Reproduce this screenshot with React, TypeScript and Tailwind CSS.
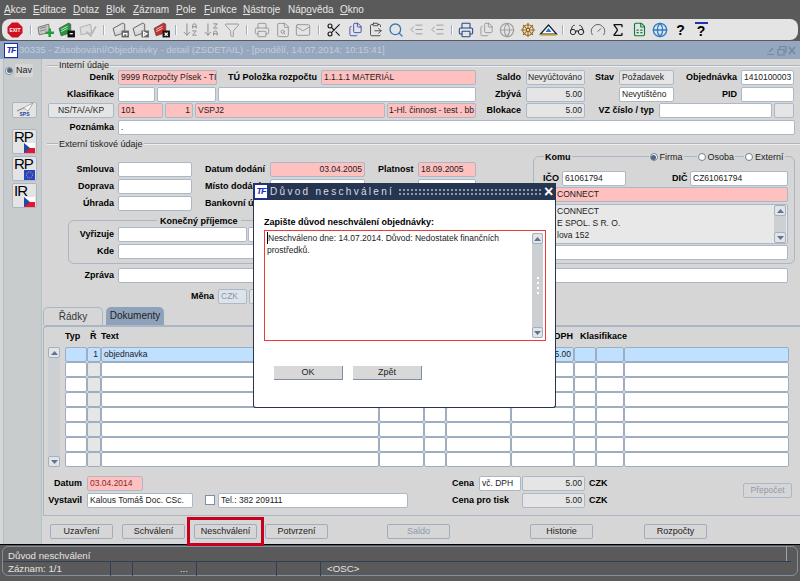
import type { ReactNode } from "react";
import {
  ArrowDownAZ,
  ArrowDownZA,
  ClipboardPaste,
  Files,
  FileSearch,
  FileSpreadsheet,
  Funnel,
  Gauge,
  Glasses,
  Globe,
  IndentDecrease,
  Mail,
  Printer,
  Scissors,
  Search,
  ShipWheel,
  Sigma,
} from "lucide-react";

const menu = [
  ["A", "kce", "w-[29px]"],
  ["E", "ditace", "w-[40px]"],
  ["D", "otaz", "w-[33px]"],
  ["B", "lok", "w-[27px]"],
  ["Z", "áznam", "w-[43px]"],
  ["P", "ole", "w-[28px]"],
  ["F", "unkce", "w-[39px]"],
  ["N", "ástroje", "w-[45px]"],
];

function Menu() {
  return (
    <div className="h-[19px] flex items-center pl-[4px] text-[10px] text-[#e6e6e6]">
      {menu.map(([a, b, w]) => (
        <span key={a} className={w}>
          <span className="underline">{a}</span>
          {b}
        </span>
      ))}
      <span className="w-[52px]">
        Náp<span className="underline">o</span>věda
      </span>
      <span>
        <span className="underline">O</span>kno
      </span>
    </div>
  );
}

function Sep({ c }: { c: string }) {
  return (
    <div className={`flex justify-center ${c}`}>
      <div className="w-[2px] h-[10px] bg-[#fafafa] border-l border-[#9fb0c6]" />
    </div>
  );
}

function Slot({ children }: { children: ReactNode }) {
  return <div className="w-[20.67px] h-[17px] flex items-center justify-center shrink-0">{children}</div>;
}

function CardIcon({ fill, mark, markFill }: { fill: string; mark: string; markFill: string }) {
  return (
    <svg width="18" height="16" viewBox="0 0 17 15">
      <path d="M1 6 L10 1 L12 2 L12 10 L3 13 Z" fill={fill} stroke="#555" strokeWidth="0.8" />
      <path d="M3 7 L9 4 M3 9 L9 6" stroke="#eee" strokeWidth="0.8" />
      <rect x="9" y="8" width="7" height="6.5" fill={markFill} />
      <path d={mark} stroke="#fff" strokeWidth="1.2" fill="none" />
    </svg>
  );
}

function PlusIcon() {
  return (
    <svg width="18" height="16" viewBox="0 0 17 15">
      <path d="M1 5 L11 2 L12 10 L2 12 Z" fill="#c8c8c8" stroke="#666" strokeWidth="0.8" />
      <path d="M3 6 L9 4.5 M3 8.5 L9 7" stroke="#777" strokeWidth="0.8" />
      <path d="M12 6 V14 M8 10 H16" stroke="#1f9e3a" strokeWidth="2.4" />
    </svg>
  );
}

function CheckIcon() {
  return (
    <svg width="18" height="16" viewBox="0 0 17 15">
      <path d="M1 5 L11 2 L12 10 L2 12 Z" fill="#ddd" stroke="#aaa" strokeWidth="0.8" />
      <path d="M7 9 L11 13 L16 4" stroke="#b5b5b5" strokeWidth="1.6" fill="none" />
    </svg>
  );
}

function Roof() {
  return (
    <svg width="19" height="13" viewBox="0 0 18 13">
      <path d="M1 11 L9 2 L17 11 Z" fill="#fff" stroke="#123" strokeWidth="1.2" />
      <path d="M6 9 L9 5 L12 9 Z" fill="#2f74c9" />
      <path d="M1 12 H17" stroke="#c9a326" strokeWidth="1.4" />
    </svg>
  );
}

function Help({ bar }: { bar?: boolean }) {
  return (
    <div className={`w-[13px] h-[15px] flex items-center justify-center text-[14px] font-bold leading-none text-black ${bar ? "border-t-2 border-[#2233aa]" : ""}`}>
      ?
    </div>
  );
}

const g = "#8e8e8e";

function Toolbar() {
  return (
    <div className="h-[21px] mx-[2px] pl-[3px] rounded-[8px] bg-[#e4e4e4] flex items-center">
      <Slot>
        <svg width="16" height="16" viewBox="0 0 16 16">
          <path d="M5 0.5 H11 L15.5 5 V11 L11 15.5 H5 L0.5 11 V5 Z" fill="#cf1020" />
          <text x="8" y="10" textAnchor="middle" fontSize="5" fontWeight="700" fill="#fff" fontFamily="Liberation Sans">EXIT</text>
        </svg>
      </Slot>
      <Sep c="w-[10.3px]" />
      <Slot><PlusIcon /></Slot>
      <Slot><CardIcon fill="#1d9a3a" mark="M11 11 H14" markFill="#111" /></Slot>
      <Slot><CheckIcon /></Slot>
      <Sep c="w-[12.3px]" />
      <Slot><CardIcon fill="#d9d9d9" mark="M11 10 V13 M14 10 V13 M11 11 H14" markFill="#666" /></Slot>
      <Slot><CardIcon fill="#d9d9d9" mark="M11 9.5 L14 11 L11 13 Z" markFill="#666" /></Slot>
      <Slot><CardIcon fill="#cf2b2b" mark="M11 10 L14 13 M14 10 L11 13" markFill="#111" /></Slot>
      <Sep c="w-[8.3px]" />
      <Slot><ArrowDownAZ size={17} color={g} strokeWidth={1.4} /></Slot>
      <Slot><ArrowDownZA size={17} color={g} strokeWidth={1.4} /></Slot>
      <Slot><Funnel size={16} color={g} strokeWidth={1.3} /></Slot>
      <Sep c="w-[9.3px]" />
      <Slot><Printer size={16} color={g} strokeWidth={1.3} /></Slot>
      <Slot><FileSearch size={16} color={g} strokeWidth={1.3} /></Slot>
      <Slot><Mail size={16} color={g} strokeWidth={1.3} /></Slot>
      <Sep c="w-[10.3px]" />
      <Slot><Scissors size={16} color="#111" strokeWidth={1.6} /></Slot>
      <Slot><Files size={15} color="#2438a8" strokeWidth={1.3} /></Slot>
      <Slot><ClipboardPaste size={15} color="#333" strokeWidth={1.3} /></Slot>
      <Slot><Search size={16} color="#3a78b5" strokeWidth={2} /></Slot>
      <Slot><IndentDecrease size={15} color={g} strokeWidth={1.3} /></Slot>
      <Slot><IndentDecrease size={15} color={g} strokeWidth={1.3} /></Slot>
      <Sep c="w-[7.3px]" />
      <Slot><Printer size={16} color="#274a86" strokeWidth={1.6} /></Slot>
      <Slot><Files size={15} color={g} strokeWidth={1.3} /></Slot>
      <Slot><Globe size={16} color="#a0a0a0" strokeWidth={1.8} /></Slot>
      <Slot><ShipWheel size={16} color="#9a6a14" strokeWidth={1.6} /></Slot>
      <Slot><Roof /></Slot>
      <Sep c="w-[8.3px]" />
      <Slot><Glasses size={16} color="#222" strokeWidth={1.4} /></Slot>
      <Slot><Gauge size={16} color="#666" strokeWidth={1.5} /></Slot>
      <Slot><Sigma size={16} color="#111" strokeWidth={2} /></Slot>
      <Slot><FileSpreadsheet size={15} color="#12783a" strokeWidth={1.8} /></Slot>
      <Slot><Globe size={16} color="#2c7cc9" strokeWidth={2} /></Slot>
      <Slot><Help /></Slot>
      <Slot><Help bar /></Slot>
    </div>
  );
}

function Logo() {
  return (
    <div className="w-[14px] h-[15px] border border-[#1a2fb0] bg-white flex items-center justify-center text-[9px] tracking-[-1px] leading-none italic font-bold text-[#1a2fb0] overflow-hidden shrink-0">
      TF
    </div>
  );
}

function WindowButtons() {
  return (
    <svg width="30" height="11" viewBox="0 0 30 11" className="mr-[4px]" fill="none" stroke="#76879e" strokeWidth="1.2">
      <path d="M1 9.5 H8 M3 7 L7 3" />
      <path d="M12 4.5 H18 V10 H12 Z M14 4 V1.5 H20 V7 H18.5" />
      <path d="M23 2 L29 9 M29 2 L23 9" strokeWidth="1.5" />
    </svg>
  );
}

function L({ c, children }: { c: string; children: ReactNode }) {
  return <span className={`text-[9px] leading-[15px] font-bold text-black whitespace-nowrap shrink-0 ${c}`}>{children}</span>;
}

function F({ c, children }: { c: string; children?: ReactNode }) {
  return (
    <div className={`h-[15px] border border-[#abb8c8] rounded-[2px] px-[2px] text-[8.5px] leading-[13px] whitespace-nowrap overflow-hidden shrink-0 ${c}`}>
      {children}
    </div>
  );
}

function Legend({ c, text }: { c: string; text: string }) {
  return (
    <div className={`flex items-center ml-[5px] ${c}`}>
      <div className="w-[11px] h-[2px] border-t border-[#aab6c6] bg-[#eee]" />
      <span className="px-[1px] text-[9px] leading-none text-[#222]">{text}</span>
      <div className="flex-1 h-[2px] border-t border-[#aab6c6] bg-[#eee]" />
    </div>
  );
}

function Arrow({ up }: { up?: boolean }) {
  return (
    <div className="h-[11px] w-full border border-[#a4b0c0] rounded-[2px] bg-[#e2e4e6] flex items-center justify-center">
      <svg width="7" height="4" viewBox="0 0 7 4">
        <path d={up ? "M3.5 0 L7 4 H0 Z" : "M0 0 H7 L3.5 4 Z"} fill="#5f7492" />
      </svg>
    </div>
  );
}

function Scroll({ c, children }: { c: string; children?: ReactNode }) {
  return (
    <div className={`flex flex-col items-center bg-[#cdd0d2] rounded-[2px] shrink-0 ${c}`}>
      <Arrow up />
      <div className="flex-1 w-full flex flex-col items-center justify-center gap-[3px]">{children}</div>
      <Arrow />
    </div>
  );
}

function Radio({ on, text, c }: { on?: boolean; text: string; c: string }) {
  return (
    <div className={`flex items-center gap-[2px] bg-[#d6d6d6] text-[9px] leading-none text-[#222] ${c}`}>
      <div className="w-[8px] h-[8px] rounded-full border border-[#6f7f96] bg-white flex items-center justify-center">
        {on && <div className="w-[5px] h-[5px] rounded-full bg-[#51657f]" />}
      </div>
      {text}
    </div>
  );
}

function Flag({ eu }: { eu?: boolean }) {
  return eu ? (
    <svg width="11" height="10" viewBox="0 0 11 10" className="self-end">
      <rect width="11" height="10" fill="#2a43c4" />
      <circle cx="5.5" cy="5" r="3" fill="none" stroke="#d7c93a" strokeWidth="0.9" strokeDasharray="1 1" />
    </svg>
  ) : (
    <svg width="11" height="10" viewBox="0 0 11 10" className="self-end">
      <rect width="11" height="5" fill="#fff" />
      <rect y="5" width="11" height="5" fill="#e4172c" />
      <path d="M0 0 L6 5 L0 10 Z" fill="#1f4aa8" />
    </svg>
  );
}

function SideBtn({ text, eu }: { text: string; eu?: boolean }) {
  return (
    <div className="w-[25px] h-[25px] mb-[2px] border border-[#aab6c6] rounded-[2px] bg-[#e4e4e4] flex flex-col px-[1px] overflow-hidden">
      <span className="text-[15px] tracking-[-1px] leading-[13px] text-black">{text}</span>
      <Flag eu={eu} />
    </div>
  );
}

function Sidebar() {
  return (
    <div className="w-[42px] shrink-0 pl-[3px] bg-[#d6d6d6]">
      <div className="h-[485px] w-[39px] bg-[#c8cccd] border-x border-[#b4bfcc] pt-[5px]">
        <div className="flex items-center ml-[1px] gap-[2px] text-[9px] leading-none text-[#222]">
          <div className="w-[8px] h-[8px] rounded-full border border-[#6f7f96] bg-white flex items-center justify-center">
            <div className="w-[5px] h-[5px] rounded-full bg-[#51657f]" />
          </div>
          <span className="bg-[#d6d6d6] px-[1px] py-[2px]">Nav</span>
        </div>
        <div className="mt-[25px] ml-[8px]">
          <div className="w-[25px] h-[16px] border border-[#aab6c6] rounded-[2px] bg-[#e4e4e4] flex flex-col items-center mb-[11px]">
            <svg width="19" height="9" viewBox="0 0 19 9">
              <path d="M2 8 L18 0 L13 8 L9 5 Z" fill="#fff" stroke="#777" strokeWidth="0.6" />
            </svg>
            <span className="text-[5px] leading-[5px] font-bold text-[#26409a]">SPS</span>
          </div>
          <SideBtn text="RP" />
          <SideBtn text="RP" eu />
          <SideBtn text="IR" />
        </div>
      </div>
    </div>
  );
}

const pink = "bg-[#ffc0c0]";
const grey = "bg-[#e5e5e5]";
const white = "bg-white";

function Internal() {
  return (
    <div>
      <Legend c="h-[13px] -mb-[2px]" text="Interní údaje" />
      <div className="flex h-[15px] mb-[2px]">
        <L c="w-[72px] text-right">Deník</L>
        <F c={`ml-[4px] w-[99px] ${pink}`}>9999 Rozpočty Písek - TI</F>
        <L c="ml-[11px] w-[89px]">TÚ Položka rozpočtu</L>
        <F c={`ml-[4px] w-[155px] ${pink}`}>1.1.1.1 MATERIÁL</F>
        <L c="w-[45px] text-right">Saldo</L>
        <F c={`ml-[5px] w-[59px] px-[1px]! ${grey}`}>Nevyúčtováno</F>
        <L c="w-[29px] text-right">Stav</L>
        <F c={`ml-[5px] w-[55px] ${grey}`}>Požadavek</F>
        <L c="w-[63px] text-right">Objednávka</L>
        <F c={`ml-[4px] w-[53px] ${white}`}>1410100003</F>
      </div>
      <div className="flex h-[15px] mb-[1px]">
        <L c="w-[72px] text-right">Klasifikace</L>
        <F c={`ml-[4px] w-[37px] ${white}`} />
        <F c={`ml-[2px] w-[59px] ${white}`} />
        <F c={`ml-[2px] w-[258px] ${white}`} />
        <L c="w-[45px] text-right">Zbývá</L>
        <F c={`ml-[5px] w-[59px] text-right ${grey}`}>5.00</F>
        <F c={`ml-[34px] w-[55px] ${white}`}>Nevytištěno</F>
        <L c="w-[63px] text-right">PID</L>
        <F c={`ml-[4px] w-[53px] ${white}`} />
      </div>
      <div className="flex h-[15px] mb-[2px]">
        <F c={`ml-[6px] w-[66px] text-center ${grey}`}>NS/TA/A/KP</F>
        <F c={`ml-[4px] w-[45px] ${pink}`}>101</F>
        <F c={`ml-[2px] w-[28px] text-right ${pink}`}>1</F>
        <F c={`ml-[2px] w-[190px] ${pink}`}>VSPJ2</F>
        <F c={`ml-[2px] w-[89px] px-[1px]! ${pink}`}>1-Hl. činnost - test . bb</F>
        <L c="w-[45px] text-right">Blokace</L>
        <F c={`ml-[5px] w-[59px] text-right ${grey}`}>5.00</F>
        <L c="w-[69px] text-right">VZ číslo / typ</L>
        <F c={`ml-[5px] w-[113px] ${white}`} />
        <F c={`ml-[2px] w-[20px] ${grey}`} />
      </div>
      <div className="flex h-[15px]">
        <L c="w-[72px] text-right">Poznámka</L>
        <F c={`ml-[4px] w-[677px] ${white}`}>.</F>
      </div>
    </div>
  );
}

function Recipient() {
  return (
    <div className="mt-[9px] ml-[26px] w-[460px] h-[44px] border border-[#aab6c6] rounded-[6px]">
      <div className="-mt-[6px] ml-[88px] w-fit px-[3px] bg-[#d6d6d6] text-[9px] leading-[12px] font-bold text-black">
        Konečný příjemce
      </div>
      <div className="flex h-[15px] mb-[2px]">
        <L c="w-[45px] text-right">Vyřizuje</L>
        <F c={`ml-[4px] w-[129px] ${white}`} />
        <F c={`ml-[1px] w-[270px] ${white}`} />
      </div>
      <div className="flex h-[15px]">
        <L c="w-[45px] text-right">Kde</L>
        <F c={`ml-[4px] w-[400px] ${white}`} />
      </div>
    </div>
  );
}

function Komu() {
  return (
    <div className="w-[262px] h-[108px] border border-[#aab6c6] rounded-[6px] px-[9px] shrink-0">
      <div className="-mt-[6px] h-[12px] flex items-center">
        <span className="ml-[1px] bg-[#d6d6d6] px-[1px] text-[9px] font-bold text-black leading-none">Komu</span>
        <Radio on text="Firma" c="ml-[77px] px-[1px]" />
        <Radio text="Osoba" c="ml-[13px] px-[1px]" />
        <Radio text="Externí" c="ml-[9px] px-[1px]" />
      </div>
      <div className="flex h-[15px] mt-[8px] mb-[1px]">
        <L c="w-[15px]">IČO</L>
        <F c={`ml-[4px] w-[64px] ${white}`}>61061794</F>
        <L c="ml-[46px] w-[14px]">DIČ</L>
        <F c={`ml-[4px] w-[98px] ${white}`}>CZ61061794</F>
      </div>
      <F c={`w-[245px] pl-[13px]! ${pink}`}>CONNECT</F>
      <div className="mt-[2px] flex w-[245px] h-[40px] border border-[#abb8c8] rounded-[2px] bg-[#e8e8e8]">
        <div className="flex-1 pl-[13px] text-[8.5px] leading-[12px]">
          <div>CONNECT</div>
          <div>E SPOL. S R. O.</div>
          <div>lova 152</div>
        </div>
        <Scroll c="w-[12px] mr-[1px]" />
      </div>
      <F c={`mt-[1px] w-[245px] ${white}`} />
    </div>
  );
}

function External() {
  return (
    <div>
      <Legend c="h-[12px] mt-[3px] mb-[6px]" text="Externí tiskové údaje" />
      <div className="flex">
        <div className="w-[491px] pt-[6px] shrink-0">
          <div className="flex h-[15px] mb-[2px]">
            <L c="w-[72px] text-right">Smlouva</L>
            <F c={`ml-[4px] w-[74px] ${white}`} />
            <L c="ml-[13px] w-[65px]">Datum dodání</L>
            <F c={`w-[95px] text-right ${pink}`}>03.04.2005</F>
            <L c="ml-[13px] w-[40px]">Platnost</L>
            <F c={`w-[58px] ${pink}`}>18.09.2005</F>
          </div>
          <div className="flex h-[15px] mb-[2px]">
            <L c="w-[72px] text-right">Doprava</L>
            <F c={`ml-[4px] w-[74px] ${white}`} />
            <L c="ml-[13px] w-[65px]">Místo dodání</L>
            <F c={`w-[95px] ${white}`} />
            <F c={`ml-[53px] w-[58px] ${white}`} />
          </div>
          <div className="flex h-[15px]">
            <L c="w-[72px] text-right">Úhrada</L>
            <F c={`ml-[4px] w-[74px] ${white}`} />
            <L c="ml-[13px] w-[65px]">Bankovní účet</L>
            <F c={`w-[206px] ${white}`} />
          </div>
          <Recipient />
        </div>
        <Komu />
      </div>
      <div className="flex h-[15px] mt-[4px]">
        <L c="w-[72px] text-right">Zpráva</L>
        <F c={`ml-[4px] w-[670px] ${white}`} />
      </div>
      <div className="flex h-[15px] mt-[6px]">
        <L c="ml-[148px] w-[24px] text-right">Měna</L>
        <F c={`ml-[4px] w-[29px] text-[#8496ad] bg-[#dde3e9]`}>CZK</F>
        <F c={`ml-[2px] w-[60px] ${grey}`} />
      </div>
    </div>
  );
}

const cols = ["w-[22px]", "w-[14px]", "w-[278px]", "w-[45px]", "w-[22px]", "w-[65px]", "w-[63px]", "w-[22px]", "w-[28px]", "w-[165px]"];

function GridRow({ first }: { first?: boolean }) {
  return (
    <div className="flex h-[15px]">
      {cols.map((w, i) => (
        <div
          key={w + i}
          className={`h-[15px] border border-[#9fadc0] rounded-[2px] text-[8.5px] leading-[13px] px-[2px] shrink-0 ${w} ${
            first ? "bg-[#bfe0ff]" : i === 1 ? "bg-[#e6e6e6]" : "bg-white"
          } ${i === 1 || i === 6 ? "text-right" : ""}`}
        >
          {first && i === 1 && "1"}
          {first && i === 2 && "objednavka"}
          {first && i === 6 && "5.00"}
        </div>
      ))}
    </div>
  );
}

function Lines() {
  return (
    <div className="ml-[1px] h-[191px] w-[757px] border-t-2 border-l border-b border-[#aab6c6] rounded-tl-[4px]">
      <div className="ml-[21px] flex h-[20px] items-center text-[9px] font-bold text-black">
        <span className="w-[25px]">Typ</span>
        <span className="w-[11px]">Ř</span>
        <span className="w-[278px]">Text</span>
        <span className="w-[132px]" />
        <span className="w-[63px] text-right pr-[1px]">DPH</span>
        <span className="pl-[6px]">Klasifikace</span>
      </div>
      <div className="flex">
        <Scroll c="ml-[4px] w-[12px] h-[120px]" />
        <div className="ml-[5px]">
          <GridRow first />
          {[1, 2, 3, 4, 5, 6, 7].map((n) => (
            <GridRow key={n} />
          ))}
        </div>
      </div>
      <div className="flex mt-[9px]">
        <div className="w-[408px] shrink-0">
          <div className="flex h-[15px] mb-[2px]">
            <L c="w-[38px] text-right">Datum</L>
            <F c={`ml-[5px] w-[56px] text-[#8a2a2a] ${pink}`}>03.04.2014</F>
          </div>
          <div className="flex h-[15px]">
            <L c="w-[38px] text-right">Vystavil</L>
            <F c={`ml-[5px] w-[106px] ${white}`}>Kalous Tomáš Doc. CSc.</F>
            <div className="ml-[12px] mt-[2px] w-[10px] h-[10px] border border-[#7e8ea6] bg-white" />
            <F c={`ml-[3px] w-[190px] ${white}`}>Tel.: 382 209111</F>
          </div>
        </div>
        <div className="w-[291px] shrink-0">
          <div className="flex h-[15px] mb-[2px]">
            <L c="w-[27px]">Cena</L>
            <F c={`w-[42px] ${white}`}>vč. DPH</F>
            <F c={`ml-[1px] w-[63px] text-right ${grey}`}>5.00</F>
            <L c="ml-[4px]">CZK</L>
          </div>
          <div className="flex h-[15px]">
            <L c="w-[70px]">Cena pro tisk</L>
            <F c={`w-[63px] text-right ${grey}`}>5.00</F>
            <L c="ml-[4px]">CZK</L>
          </div>
        </div>
        <div className="mt-[7px] w-[49px] h-[15px] border border-[#abb8c8] rounded-[2px] text-[8.5px] leading-[13px] text-center text-[#8d9aac]">
          Přepočet
        </div>
      </div>
    </div>
  );
}

function Btn({ c, off, children }: { c: string; off?: boolean; children: ReactNode }) {
  return (
    <div
      className={`relative w-[63px] h-[15px] border border-[#9fadc0] rounded-[2px] text-[9px] leading-[13px] text-center shrink-0 ${
        off ? "text-[#8d9aac]" : "text-[#222]"
      } ${c}`}
    >
      {children}
    </div>
  );
}

function Main() {
  return (
    <div className="flex-1 bg-[#d6d6d6] h-[485px] text-[#222]">
      <Internal />
      <External />
      <div className="mt-[3px] flex h-[18px] ml-[1px]">
        <div className="w-[60px] border-x border-t border-[#aab6c6] rounded-t-[5px] text-center text-[10px] leading-[18px] text-[#333]">
          Řádky
        </div>
        <div className="ml-[3px] w-[58px] bg-[#8fa2bc] rounded-t-[5px] text-center text-[10px] leading-[18px] text-[#222]">
          Dokumenty
        </div>
      </div>
      <Lines />
      <div className="flex mt-[8px]">
        <Btn c="ml-[8px]">Uzavření</Btn>
        <Btn c="ml-[9px]">Schválení</Btn>
        <Btn c="ml-[9px]">
          Neschválení
          <div className="absolute -left-[8px] -right-[8px] -top-[8px] -bottom-[8px] border-[3px] border-[#c8001e]" />
        </Btn>
        <Btn c="ml-[8px]">Potvrzení</Btn>
        <Btn c="ml-[59px]" off>Saldo</Btn>
        <Btn c="ml-[80px]">Historie</Btn>
        <Btn c="ml-[51px]">Rozpočty</Btn>
      </div>
    </div>
  );
}

function Dialog() {
  return (
    <div className="absolute left-[253px] top-[183px] w-[303px] h-[225px] bg-white border border-[#28354a] border-t-0 rounded-b-[3px] text-[#222]">
      <div className="h-[17px] -mx-[1px] bg-[#263650] flex items-center pl-[1px]">
        <Logo />
        <span className="ml-[2px] w-[127px] text-[10px] tracking-[2.3px] text-[#d8dde6] whitespace-nowrap">Důvod neschválení</span>
        <div className="ml-[1px] w-[143px] h-[8px] bg-[radial-gradient(#8d9ab0_0.8px,transparent_1px)] bg-[length:4px_4px]" />
        <span className="ml-[3px] text-[16px] leading-none font-bold text-white">×</span>
      </div>
      <div className="pl-[10px] pt-[16px]">
        <div className="h-[12px] text-[9px] leading-[12px] font-bold text-black">Zapište důvod neschválení objednávky:</div>
        <div className="mt-[2px] w-[282px] h-[111px] border border-[#f03a3a] flex p-[1px]">
          <div className="flex-1 pl-[1px] text-[8.5px] leading-[12px]">
            <div className="border-l border-black w-fit">Neschváleno dne: 14.07.2014. Důvod: Nedostatek finančních</div>
            prostředků.
          </div>
          <Scroll c="w-[11px] mr-[1px] my-[1px]">
            <div className="w-[2px] h-[2px] bg-white" />
            <div className="w-[2px] h-[2px] bg-white" />
            <div className="w-[2px] h-[2px] bg-white" />
            <div className="w-[2px] h-[2px] bg-white" />
          </Scroll>
        </div>
        <div className="flex mt-[25px] ml-[10px]">
          <div className="w-[69px] h-[14px] bg-[#d8d8d8] border-r border-b border-[#7e8ea6] text-[9px] leading-[13px] text-center">OK</div>
          <div className="ml-[10px] w-[69px] h-[14px] bg-[#d8d8d8] border-r border-b border-[#7e8ea6] text-[9px] leading-[13px] text-center">Zpět</div>
        </div>
      </div>
    </div>
  );
}

function Status() {
  const seps = ["w-[108px]", "w-[22px]", "w-[64px] text-right pr-[8px]", "w-[80px]", "w-[44px]"];
  return (
    <div className="mx-[2px] mt-[1px] h-[30px] border border-[#838fa3] rounded-[6px] text-[9.7px] text-[#e4e4e4]">
      <div className="h-[15px] mr-[6px] flex border-b border-[#2f3f58]">
        <span className="flex-1 pl-[5px] leading-[17px]">Důvod neschválení</span>
        <div className="w-[1px] mr-[4px] bg-[#9aa6b6]" />
      </div>
      <div className="h-[14px] flex leading-[14px]">
        {seps.map((w, i) => (
          <div key={w} className={`border-r border-[#2f3f58] shrink-0 ${i === 0 ? "pl-[5px]" : ""} ${w}`}>
            {i === 0 && "Záznam: 1/1"}
            {i === 2 && "..."}
          </div>
        ))}
        <span className="pl-[6px]">&lt;OSC&gt;</span>
      </div>
    </div>
  );
}

export default function App() {
  return (
    <div className="relative w-[800px] h-[581px] overflow-hidden bg-[#5a5a5a] font-['Liberation_Sans',Arial,sans-serif]">
      <Menu />
      <Toolbar />
      <div className="mt-[1px] h-[504px] bg-[#d6d6d6] border-b border-black">
        <div className="h-[18px] bg-[#94a7bf] flex items-center pl-[4px]">
          <Logo />
          <span className="ml-[1px] flex-1 text-[9.6px] text-[#c4ccd6] whitespace-nowrap">
            30335 - Zásobování/Objednávky - detail (ZSDETAIL) - [pondělí, 14.07.2014; 10:15:41]
          </span>
          <WindowButtons />
        </div>
        <div className="flex">
          <Sidebar />
          <Main />
        </div>
      </div>
      <Status />
      <Dialog />
    </div>
  );
}
